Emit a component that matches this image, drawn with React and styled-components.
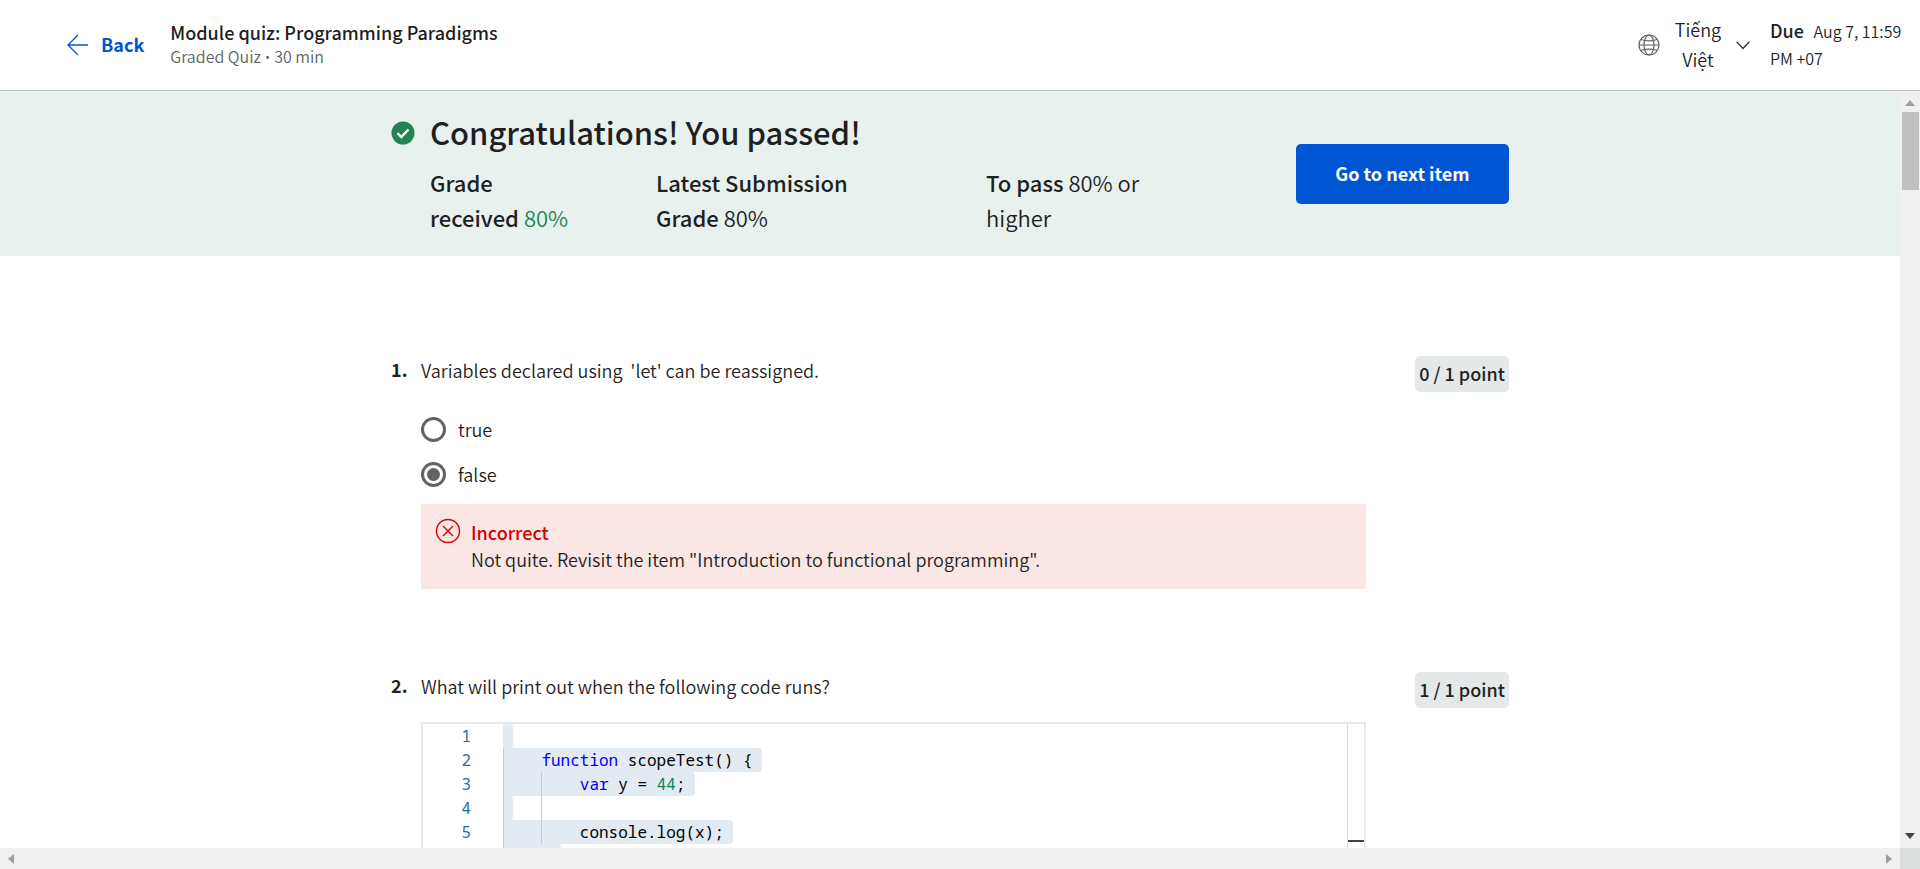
import { useState } from "react";
import styled, { createGlobalStyle } from "styled-components";

const questions = [
    {
        id: 1,
        text: "Variables declared using \u00a0'let' can be reassigned.",
        points: "0 / 1 point",
        options: ["true", "false"],
        answer: "false",
        feedback: {
            title: "Incorrect",
            text: "Not quite. Revisit the item \"Introduction to functional programming\".",
        },
    },
    {
        id: 2,
        text: "What will print out when the following code runs?",
        points: "1 / 1 point",
        code: [
            { guides: 0, tokens: [] },
            { guides: 1, tokens: [["    "], ["function", "keyword"], [" scopeTest() {"]] },
            { guides: 2, tokens: [["        "], ["var", "keyword"], [" y = "], ["44", "number"], [";"]] },
            { guides: 2, tokens: [] },
            { guides: 2, tokens: [["        console.log(x);"]] },
            { guides: 1, tokens: [["    }"]] },
        ],
    },
];

const Header = () => (
    <HeaderBar>
        <BackLink href="#">
            <svg width="22" height="22" viewBox="0 0 22 22" fill="none" stroke="currentColor" strokeWidth="1.3">
                <path d="M11 1L1 11l10 10M1 11h20" />
            </svg>
            <span>Back</span>
        </BackLink>
        <ModuleInfo>
            <h1>Module quiz: Programming Paradigms</h1>
            <p>Graded Quiz <Dot>•</Dot> 30 min</p>
        </ModuleInfo>
        <LanguageButton type="button" aria-haspopup="listbox">
            <svg width="22" height="22" viewBox="0 0 22 22" fill="none" stroke="#636363" strokeWidth="1.2">
                <circle cx="11" cy="11" r="10" />
                <ellipse cx="11" cy="11" rx="5" ry="10" />
                <path d="M1 11h20M2.8 5.5c4.5 1.4 11.9 1.4 16.4 0M2.8 16.5c4.5-1.4 11.9-1.4 16.4 0" />
            </svg>
            <span>Tiếng Việt</span>
            <svg width="14" height="9" viewBox="0 0 14 9" fill="none" stroke="#333" strokeWidth="1.3">
                <path d="M.6.8L7 7.5 13.4.8" />
            </svg>
        </LanguageButton>
        <DueDate><b>Due</b> Aug 7, 11:59 PM +07</DueDate>
    </HeaderBar>
);

const ResultBanner = () => (
    <Banner>
        <BannerInner>
            <svg width="24" height="24" viewBox="0 0 24 24">
                <circle cx="12" cy="12" r="11.5" fill="#1f8354" />
                <path d="M6.5 12.2l3.8 3.9 7.2-7.6" fill="none" stroke="#fff" strokeWidth="2.4" />
            </svg>
            <Result>
                <h2>Congratulations! You passed!</h2>
                <Grades>
                    <Grade $passed><b>Grade received</b> <span>80%</span></Grade>
                    <Grade><b>Latest Submission Grade</b> <span>80%</span></Grade>
                    <Grade><b>To pass</b> <span>80% or higher</span></Grade>
                </Grades>
            </Result>
            <NextButton type="button">Go to next item</NextButton>
        </BannerInner>
    </Banner>
);

const Feedback = ({title, text}) => (
    <FeedbackBox>
        <svg width="26" height="26" viewBox="0 0 26 26" fill="none" stroke="#d30001" strokeWidth="1.4">
            <circle cx="13" cy="13" r="11.5" />
            <path d="M8 8l10 10M18 8L8 18" />
        </svg>
        <div>
            <h4>{title}</h4>
            <p>{text}</p>
        </div>
    </FeedbackBox>
);

const CodeBlock = ({lines}) => (
    <Editor>
        <CodeLines>
            {lines.map((line, i) => (
                <CodeLine key={i}>
                    <LineNumber>{i + 1}</LineNumber>
                    <Selected $guides={line.guides}>
                        {line.tokens.map(([text, kind], j) => <Token key={j} $kind={kind}>{text}</Token>)}{" "}
                    </Selected>
                </CodeLine>
            ))}
        </CodeLines>
        <Ruler />
    </Editor>
);

const Question = ({question}) => {
    const [answer, setAnswer] = useState(question.answer);

    return(
        <QuestionRow>
            <QuestionNumber>{question.id}.</QuestionNumber>
            <QuestionBody>
                <Prompt>{question.text}</Prompt>
                {question.options ?
                    <Options role="radiogroup">
                        {question.options.map((option) => (
                            <Option key={option}>
                                <input type="radio" name={`q${question.id}`} checked={answer === option} onChange={() => setAnswer(option)}/>
                                {option}
                            </Option>
                        ))}
                    </Options>
                : null}
                {question.feedback ? <Feedback {...question.feedback}/> : null}
                {question.code ? <CodeBlock lines={question.code}/> : null}
            </QuestionBody>
            <Points>{question.points}</Points>
        </QuestionRow>
    )
}

const App = () => (
    <Page>
        <GlobalStyle />
        <Header />
        <ScrollFrame>
            <Content>
                <ResultBanner />
                <QuestionList>
                    {questions.map((question) => <Question key={question.id} question={question}/>)}
                </QuestionList>
            </Content>
            <VerticalBar>
                <svg width="10" height="6" viewBox="0 0 10 6"><path d="M5 0l5 6H0z" fill="#a0a0a0" /></svg>
                <Thumb />
                <svg width="10" height="6" viewBox="0 0 10 6"><path d="M0 0h10L5 6z" fill="#444" /></svg>
            </VerticalBar>
            <HorizontalBar>
                <svg width="6" height="10" viewBox="0 0 6 10"><path d="M6 0v10L0 5z" fill="#a0a0a0" /></svg>
                <svg width="6" height="10" viewBox="0 0 6 10"><path d="M0 0v10l6-5z" fill="#a0a0a0" /></svg>
            </HorizontalBar>
            <Corner />
        </ScrollFrame>
    </Page>
)

const GlobalStyle = createGlobalStyle`
    *{
        box-sizing: border-box;
    }
    body{
        margin: 0;
        color: #1f1f1f;
        font-family: "Noto Sans CJK SC", "Noto Sans", sans-serif;
        font-size: 18px;
        font-weight: 350;
        line-height: 28px;
    }
    h1, h2, h3, h4, p{
        margin: 0;
        font-size: inherit;
    }
    b, h1, h2, h4{
        font-weight: 500;
    }
    svg{
        display: block;
        flex: none;
    }
    button, input{
        font: inherit;
        color: inherit;
    }
`

const Page = styled.div`
    display: grid;
    grid-template-rows: auto minmax(0, 1fr);
    height: 100vh;
    overflow: hidden;
    background-color: #fff;
`

const HeaderBar = styled.header`
    display: flex;
    align-items: center;
    height: 91px;
    padding: 0 18px 0 67px;
    border-bottom: 1px solid #bdbdbd;
`

const BackLink = styled.a`
    display: flex;
    align-items: center;
    gap: 12px;
    margin-right: 26px;
    color: #0056d2;
    font-weight: 700;
    text-decoration: none;
    span{
        padding-bottom: 2px;
    }
`

const ModuleInfo = styled.div`
    flex: 1;
    padding-bottom: 2px;
    line-height: 24px;
    h1{
        font-size: 18px;
    }
    p{
        color: #636363;
        font-size: 16px;
    }
`

const Dot = styled.span`
    font-family: "Noto Sans", sans-serif;
`

const LanguageButton = styled.button`
    display: flex;
    align-items: center;
    gap: 14px;
    margin-right: 20px;
    padding: 0;
    border: 0;
    background: none;
    line-height: 30px;
    cursor: pointer;
    span{
        width: 48px;
        padding-bottom: 2px;
    }
`

const DueDate = styled.p`
    width: 132px;
    padding-bottom: 2px;
    font-size: 16px;
    line-height: 27px;
    b{
        margin-right: 6px;
        font-size: 18px;
    }
`

const ScrollFrame = styled.div`
    display: grid;
    grid-template-columns: minmax(0, 1fr) 20px;
    grid-template-rows: minmax(0, 1fr) 21px;
`

const Content = styled.main`
    overflow: hidden;
`

const Banner = styled.section`
    padding: 18px 0 21px;
    background-color: #e8f1ee;
`

const BannerInner = styled.div`
    display: flex;
    max-width: 1118px;
    margin: 0 auto;
    > svg{
        margin: 12px 15px 0 0;
    }
`

const Result = styled.div`
    flex: 1;
    h2{
        font-size: 31px;
        line-height: 46px;
        margin-bottom: 10px;
    }
`

const Grades = styled.div`
    display: flex;
    gap: 82px;
`

const Grade = styled.p`
    max-width: 248px;
    font-size: 22px;
    line-height: 35px;
    &:first-child{
        max-width: 144px;
    }
    &:last-child{
        max-width: 170px;
    }
    span{
        color: ${({$passed}) => $passed ? "#1f8354" : "inherit"};
    }
`

const NextButton = styled.button`
    width: 213px;
    height: 60px;
    margin-top: 35px;
    padding: 0 0 2px;
    border: 0;
    border-radius: 5px;
    background-color: #0056d2;
    color: #fff;
    font-weight: 700;
    cursor: pointer;
`

const QuestionList = styled.div`
    display: flex;
    flex-direction: column;
    gap: 83px;
    max-width: 1118px;
    margin: 100px auto 0;
`

const QuestionRow = styled.section`
    display: grid;
    grid-template-columns: 30px minmax(0, 1fr) 94px;
    align-items: start;
`

const QuestionNumber = styled.span`
    font-weight: 700;
    line-height: 26px;
`

const QuestionBody = styled.div`
    margin-right: 49px;
`

const Prompt = styled.p`
    line-height: 28px;
`

const Options = styled.div`
    display: flex;
    flex-direction: column;
    gap: 17px;
    padding: 31px 0 16px;
`

const Option = styled.label`
    display: flex;
    align-items: center;
    gap: 12px;
    input{
        appearance: none;
        width: 25px;
        height: 25px;
        margin: 0;
        padding: 3px;
        border: 3px solid #636363;
        border-radius: 50%;
        background-clip: content-box;
    }
    input:checked{
        background-color: #636363;
    }
`

const FeedbackBox = styled.div`
    display: flex;
    gap: 10px;
    padding: 14px 14px 16px;
    background-color: #fae6e5;
    h4{
        color: #d30001;
    }
    p{
        line-height: 27px;
    }
`

const Points = styled.div`
    padding-bottom: 2px;
    border-radius: 5px;
    background-color: #e5e8e8;
    font-weight: 500;
    line-height: 34px;
    text-align: center;
    white-space: nowrap;
`

const Editor = styled.div`
    display: flex;
    margin-top: 22px;
    border: 2px solid #e5e8e8;
`

const CodeLines = styled.div`
    flex: 1;
    font-family: "Noto Sans Mono", "Liberation Mono", monospace;
    font-size: 16px;
    font-weight: 400;
    line-height: 24px;
    white-space: pre;
`

const CodeLine = styled.div`
    display: flex;
    color: #000;
`

const LineNumber = styled.span`
    width: 48px;
    margin-right: 32px;
    color: #1d6fa5;
    text-align: right;
`

const Selected = styled.code`
    height: 24px;
    border-radius: 0 4px 4px 0;
    background-color: #e4eaf2;
    font: inherit;
    ${({$guides}) => $guides > 0 ? `box-shadow: inset 1px 0 #c8c8c8;` : ""}
    ${({$guides}) => $guides > 1 ? `
        position: relative;
        &::after{
            content: "";
            position: absolute;
            top: 0;
            bottom: 0;
            left: 4ch;
            border-left: 1px solid #c8c8c8;
        }
    ` : ""}
`

const Token = styled.span`
    color: ${({$kind}) => $kind === "keyword" ? "#0000ff" : $kind === "number" ? "#098658" : "inherit"};
`

const Ruler = styled.div`
    width: 17px;
    padding-top: 116px;
    border-left: 1px solid #d8d8d8;
    &::before{
        content: "";
        display: block;
        height: 2px;
        background-color: #424242;
    }
`

const VerticalBar = styled.div`
    display: flex;
    flex-direction: column;
    align-items: center;
    padding: 9px 0;
    background-color: #f0f0f0;
    svg:last-child{
        margin-top: auto;
    }
`

const Thumb = styled.div`
    width: 17px;
    height: 78px;
    margin-top: 6px;
    background-color: #c0c0c0;
`

const HorizontalBar = styled.div`
    display: flex;
    align-items: center;
    justify-content: space-between;
    padding: 0 8px;
    background-color: #f0f0f0;
`

const Corner = styled.div`
    background-color: #dcdedd;
`

export default App;
